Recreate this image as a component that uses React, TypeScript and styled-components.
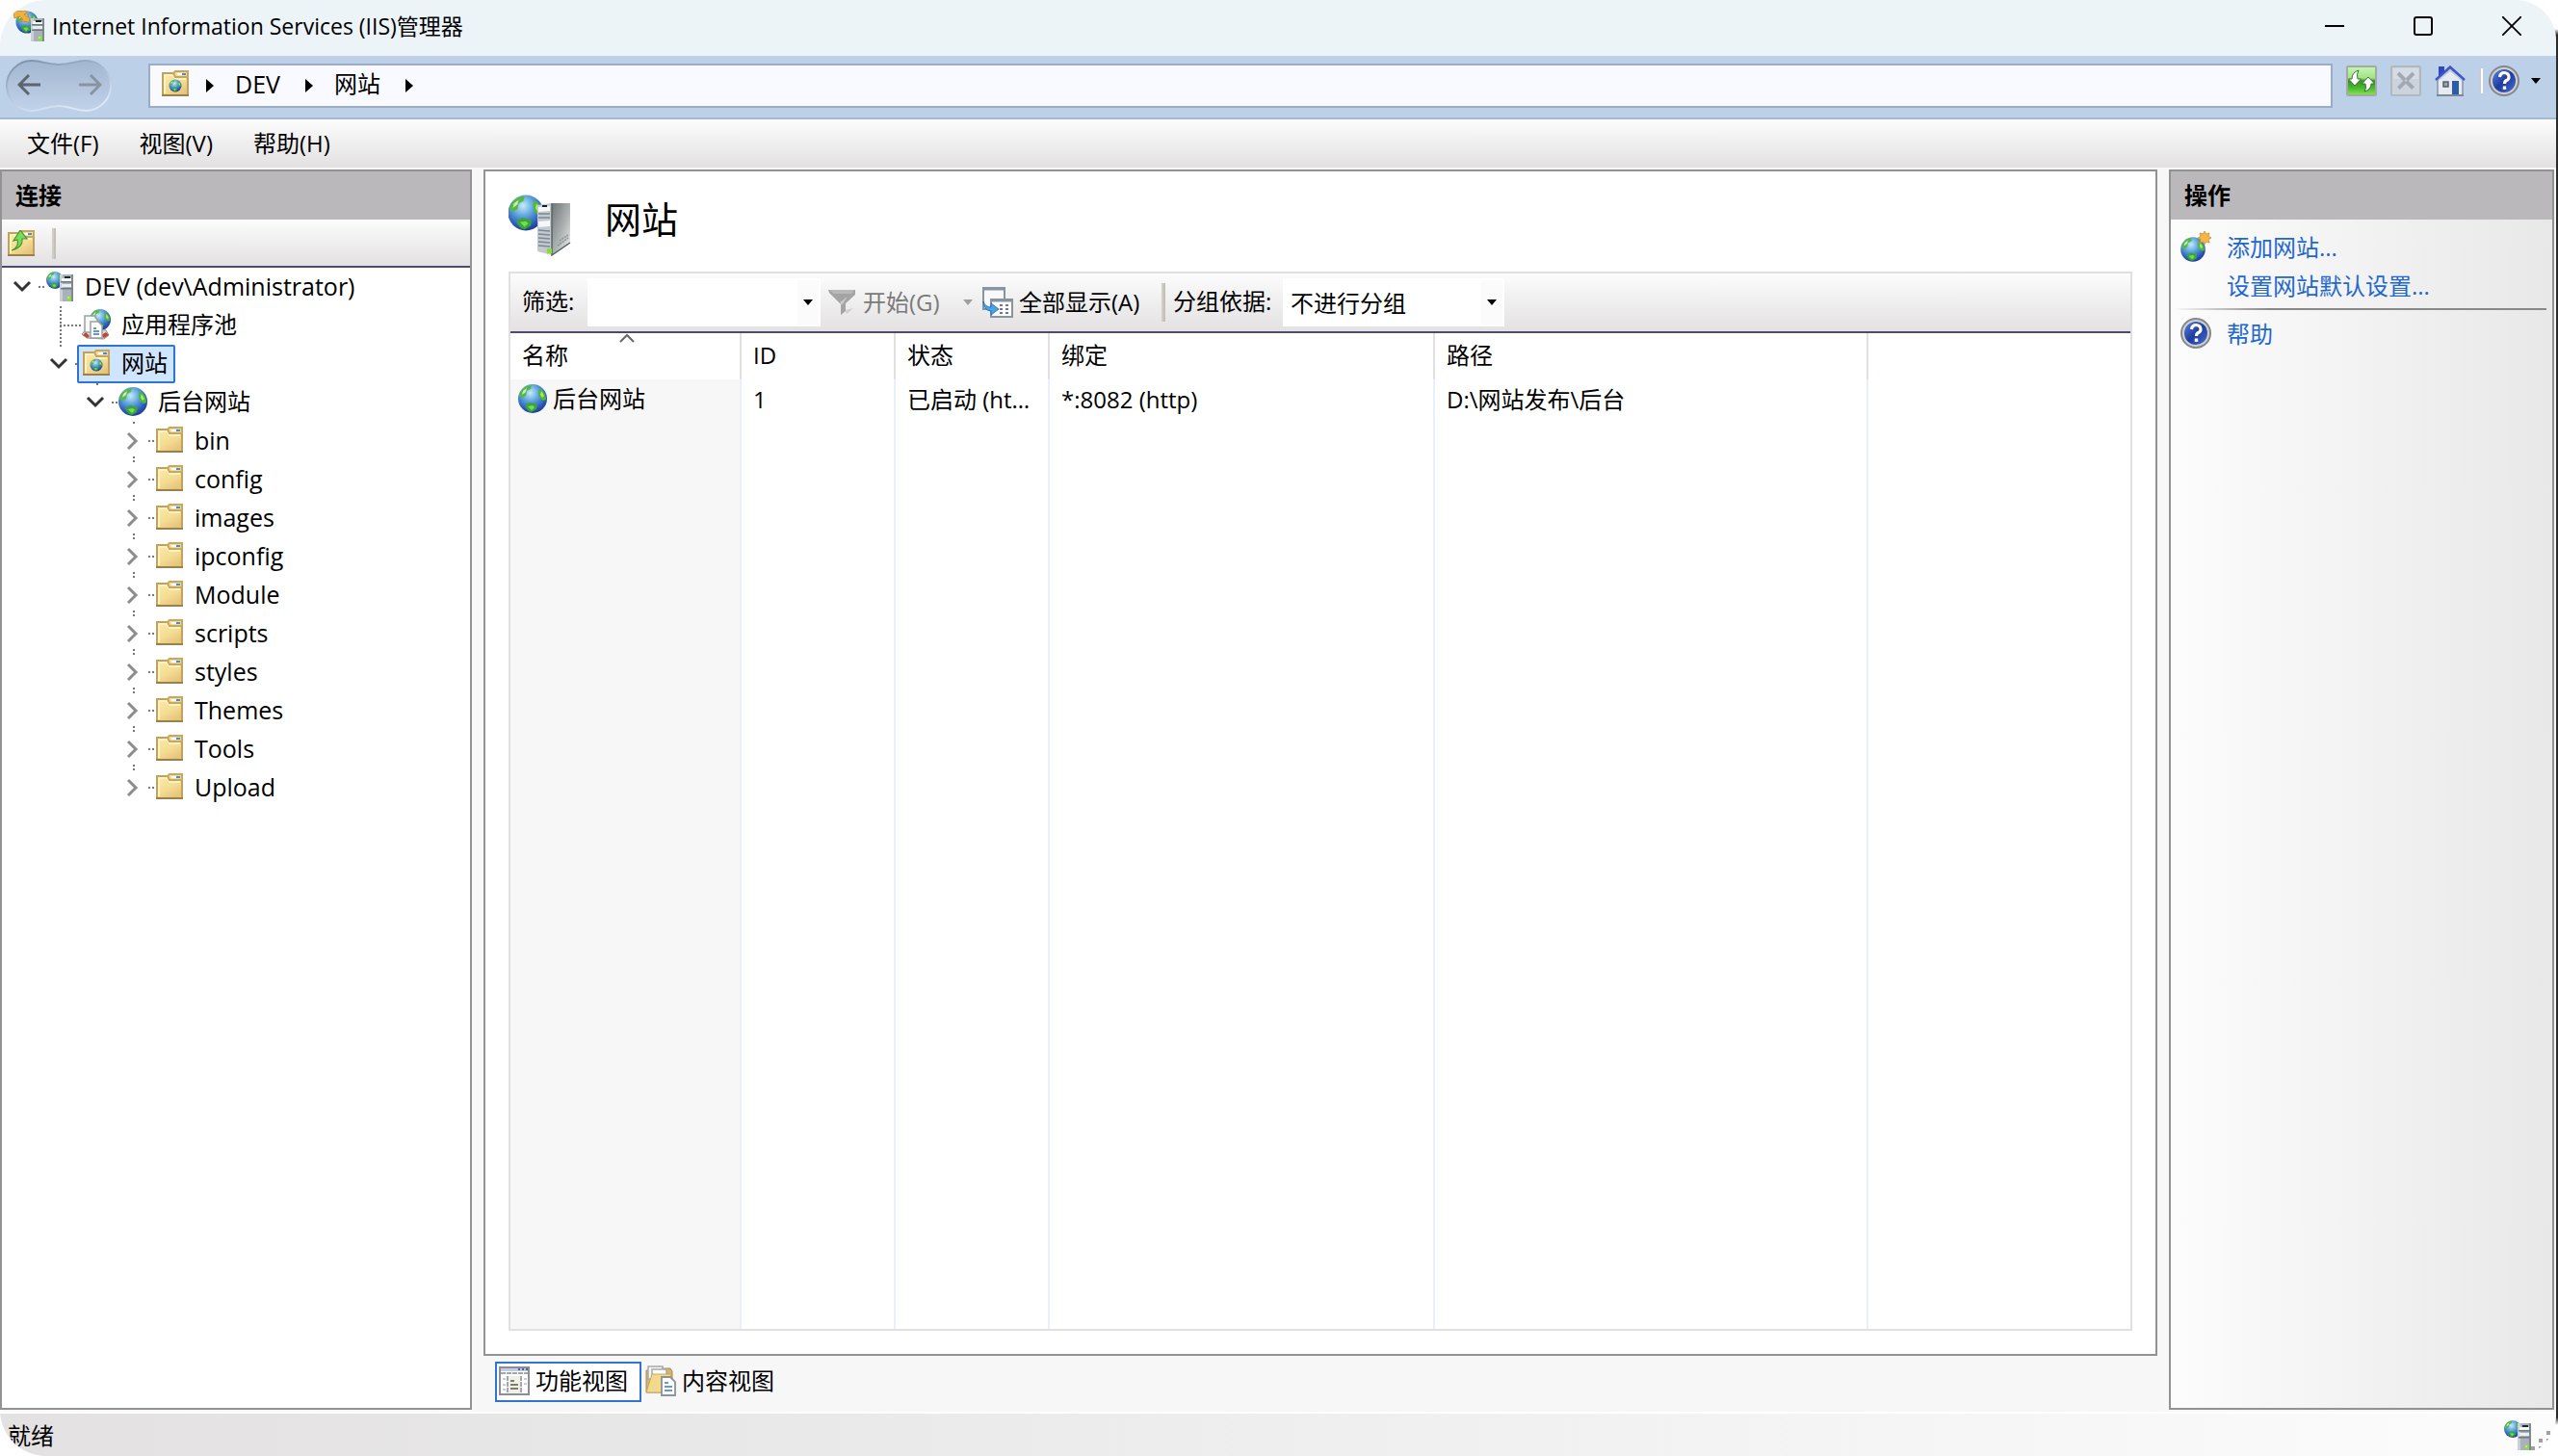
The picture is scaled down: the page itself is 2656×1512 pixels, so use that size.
import React, { useId, useState } from 'react';
import styled, { createGlobalStyle, css } from 'styled-components';

const color = {
  border: '#929292',
  line: '#4d4a6e',
  accent: '#2f74d0',
  link: '#2268cc',
  header: '#bbb8bb',
  surface: '#f7f7f7',
  rule: '#e0e0e0',
};
const barGradient = 'linear-gradient(#fcfcfc, #e3e1e2)';

const GlobalStyle = createGlobalStyle`
  * { box-sizing: border-box; }
  html, body, #root { height: 100%; }
  body {
    margin: 0;
    background: #fff;
    color: #000;
    overflow: hidden;
    font: 24px/32px "Open Sans", "Noto Sans CJK SC", sans-serif;
  }
  button, input, select { font: inherit; color: inherit; }
  svg { display: block; flex: none; }
`;

/* ---------- shared parts ---------- */

const plainButton = css`
  display: flex;
  align-items: center;
  border: 0;
  padding: 0;
  background: none;
  white-space: nowrap;
`;
const Button = styled.button`${plainButton}`;

const Desktop = styled.div`
  height: 100%;
  padding-right: 2px;
  background: linear-gradient(#fff 30px, #2c2c2c 36px, #2c2c2c calc(100% - 40px), #fff calc(100% - 32px));
`;
const Window = styled.div`
  height: 100%;
  display: flex;
  flex-direction: column;
  overflow: hidden;
  background: ${color.surface};
  border-radius: 48px 42px 42px 48px;
`;
const Corners = styled.div`
  height: 100%;
  background: linear-gradient(90deg, #fff 60px, transparent 60px, transparent calc(100% - 60px), transparent 0);
`;

/* ---------- title bar ---------- */

const TitleBar = styled.header`
  flex: none;
  display: flex;
  align-items: center;
  height: 58px;
  padding: 0 0 4px 14px;
  background: #ecf4f8;
`;
const Title = styled.h1`
  flex: 1;
  margin: 0 0 0 8px;
  font-size: 23px;
  line-height: 32px;
  font-weight: 400;
`;
const CaptionButton = styled(Button)`
  justify-content: center;
  width: 92px;
  height: 52px;
`;

/* ---------- address bar ---------- */

const NavBar = styled.nav`
  flex: none;
  display: flex;
  align-items: flex-start;
  height: 66px;
  padding: 4px 16px 0 6px;
  background: #bcd0e8;
  border-bottom: 2px solid #a5b9d4;
`;
const History = styled.div`
  position: relative;
  width: 110px;
  height: 54px;
`;
const HistoryButtons = styled.div`
  position: absolute;
  inset: 0;
  display: flex;
  justify-content: space-between;
  padding: 14px 10px 0 12px;
  align-items: flex-start;
`;
const Address = styled.div`
  flex: 1;
  display: flex;
  align-items: center;
  height: 46px;
  margin: 4px 14px 0 38px;
  padding: 0 12px 4px;
  background: #f8faff;
  border: 2px solid #9aacc6;
`;
const Crumb = styled(Button)<{ $first?: boolean }>`
  height: 32px;
  padding-top: 4px;
  margin: 0 22px 0 ${(p) => (p.$first ? 18 : 26)}px;
`;
const CrumbText = styled(Button)<{ $latin?: boolean }>`
  font-size: ${(p) => (p.$latin ? 25 : 24)}px;
`;
const NavTools = styled.div`
  display: flex;
  align-items: center;
  gap: 14px;
  padding-top: 6px;
`;
const NavDivider = styled.span`
  width: 4px;
  height: 26px;
  margin-right: -8px;
  border-left: 2px solid #c9cdd2;
  border-right: 2px solid #fff;
`;
const HelpDrop = styled(Button)`
  gap: 12px;
`;

/* ---------- menu ---------- */

const MenuBar = styled.div`
  flex: none;
  display: flex;
  align-items: center;
  gap: 42px;
  height: 50px;
  padding: 0 28px;
  background: ${barGradient};
`;

/* ---------- workspace ---------- */

const Workspace = styled.div`
  flex: 1;
  min-height: 0;
  display: grid;
  grid-template-columns: 490px minmax(0, 1fr) 400px;
  column-gap: 12px;
  padding: 2px 2px 2px 0;
`;
const Panel = styled.section<{ $shaded?: boolean }>`
  display: flex;
  flex-direction: column;
  min-height: 0;
  border: 2px solid ${color.border};
  background: ${(p) => (p.$shaded ? 'linear-gradient(90deg, #fcfcfc, #e8e8e8)' : '#fff')};
`;
const PanelTitle = styled.h2`
  flex: none;
  margin: 0;
  padding: 9px 14px;
  font-size: 24px;
  line-height: 32px;
  font-weight: 700;
  background: ${color.header};
`;
const PanelTools = styled.div`
  flex: none;
  display: flex;
  align-items: center;
  gap: 18px;
  height: 50px;
  padding: 2px 6px 0;
  background: ${barGradient};
  border-bottom: 2px solid ${color.line};
`;
const Divider = styled.span<{ $h: number }>`
  width: 4px;
  height: ${(p) => p.$h}px;
  border-left: 2px solid #cfcdc4;
  border-right: 2px solid #c3c1b2;
`;

/* ---------- tree ---------- */

const Tree = styled.ul`
  margin: 0;
  padding: 0;
  list-style: none;
`;
const TreeRow = styled.li<{ $level: number }>`
  display: flex;
  align-items: center;
  height: 40px;
  padding-left: ${(p) => p.$level * 38}px;
`;
const dots = (dir: string) => `repeating-linear-gradient(${dir}, #777 0 2px, transparent 2px 4px)`;
const Toggle = styled.button<{ $root?: boolean; $last?: boolean; $leaf?: boolean }>`
  ${plainButton}
  position: relative;
  justify-content: center;
  width: 38px;
  height: 40px;
  padding-left: 4px;
  &::before, &::after {
    content: '';
    position: absolute;
    left: 22px;
    width: 2px;
    background: ${dots('to bottom')};
  }
  &::before { top: 0; height: ${(p) => (p.$root ? 0 : p.$leaf ? 40 : 2)}px; }
  &::after { bottom: 2px; height: ${(p) => (p.$last || p.$leaf ? 0 : 2)}px; }
`;
const Stub = styled.span<{ $long?: boolean }>`
  flex: none;
  width: ${(p) => (p.$long ? 24 : 8)}px;
  height: 2px;
  margin-left: ${(p) => (p.$long ? -16 : 0)}px;
  margin-right: -6px;
  background: ${dots('to right')};
`;
const Node = styled.button<{ $selected?: boolean; $latin?: boolean }>`
  ${plainButton}
  gap: 12px;
  height: 40px;
  padding: 0 6px 2px 4px;
  font-size: ${(p) => (p.$latin ? 25 : 24)}px;
  border: 2px solid transparent;
  border-radius: 2px;
  ${(p) => p.$selected && css`
    background: #cfe5fd;
    border-color: ${color.accent};
  `}
`;
const IconSlot = styled.span<{ $w: number }>`
  display: flex;
  justify-content: center;
  width: ${(p) => p.$w}px;
`;

/* ---------- centre ---------- */

const Centre = styled.main`
  display: flex;
  flex-direction: column;
  min-height: 0;
`;
const Page = styled(Panel)`
  flex: 1;
  padding: 24px;
`;
const PageHead = styled.div`
  flex: none;
  display: flex;
  gap: 34px;
  height: 80px;
`;
const PageTitle = styled.h2`
  margin: 0;
  font-size: 38px;
  line-height: 50px;
  font-weight: 400;
`;
const ListBox = styled.div`
  flex: 1;
  min-height: 0;
  display: flex;
  flex-direction: column;
  border: 2px solid ${color.rule};
`;
const ListTools = styled.div`
  flex: none;
  display: flex;
  align-items: center;
  height: 62px;
  padding-left: 12px;
  background: ${barGradient};
  border-bottom: 2px solid ${color.line};
`;
const FieldLabel = styled.label<{ $w: number }>`
  width: ${(p) => p.$w}px;
  padding-bottom: 2px;
  white-space: nowrap;
`;
const Combo = styled.span<{ $w: number }>`
  position: relative;
  display: flex;
  width: ${(p) => p.$w}px;
  height: 50px;
  background: #fff;
`;
const comboField = css`
  flex: 1;
  min-width: 0;
  padding: 2px 8px 0;
  border: 0;
  background: none;
  outline: 0;
  appearance: none;
`;
const ComboInput = styled.input`${comboField}`;
const ComboSelect = styled.select`${comboField}`;
const ComboArrow = styled.span`
  display: flex;
  align-items: center;
  justify-content: center;
  width: 22px;
  margin: 2px;
  background: #fbfbfb;
  pointer-events: none;
`;
const GoButton = styled(Button)`
  gap: 8px;
  width: 140px;
  margin-left: 8px;
  color: #7a7a7a;
`;
const GoArrow = styled(Button)`
  width: 20px;
`;
const ShowAll = styled(Button)`
  gap: 6px;
  width: 186px;
`;
const GroupBy = styled.div`
  display: flex;
  align-items: center;
  margin-left: 8px;
`;

const TableWrap = styled.div`
  flex: 1;
  min-height: 0;
`;
const Table = styled.table`
  width: 100%;
  height: 100%;
  table-layout: fixed;
  border-spacing: 0;
`;
const Col = styled.col<{ $w?: number }>`
  width: ${(p) => (p.$w ? `${p.$w}px` : 'auto')};
`;
const Th = styled.th`
  position: relative;
  height: 48px;
  padding: 0 12px 2px;
  text-align: left;
  font-weight: 400;
  border-right: 2px solid ${color.rule};
  &:last-child { border-right: 0; }
`;
const SortMark = styled.span`
  position: absolute;
  top: 0;
  left: 50%;
  margin-left: -6px;
`;
const Td = styled.td`
  height: 44px;
  padding: 0 12px 2px;
  border-right: 2px solid #e8f1fb;
  overflow: hidden;
  white-space: nowrap;
  text-overflow: ellipsis;
  &:first-child { background: ${color.surface}; padding: 0 8px 4px; }
  &:last-child { border-right: 0; }
`;
const FillTd = styled(Td)`
  height: auto;
`;
const SiteName = styled.span`
  display: flex;
  align-items: center;
  gap: 6px;
`;

const ViewTabs = styled.div`
  flex: none;
  display: flex;
  height: 56px;
  padding: 6px 12px 0;
`;
const ViewTab = styled.button<{ $active: boolean }>`
  ${plainButton}
  gap: 6px;
  height: 42px;
  padding: 0 12px 2px 2px;
  border: 2px solid ${(p) => (p.$active ? color.accent : 'transparent')};
  background: ${(p) => (p.$active ? '#fff' : 'none')};
`;

/* ---------- actions ---------- */

const Actions = styled.ul`
  margin: 0;
  padding: 8px 6px 0 2px;
  list-style: none;
`;
const Action = styled.li`
  display: flex;
  align-items: center;
  gap: 16px;
  height: 40px;
  padding-left: 8px;
`;
const ActionLink = styled.a`
  padding-top: 2px;
  color: ${color.link};
  text-decoration: none;
`;
const ActionRule = styled.li`
  height: 2px;
  margin: 4px 0;
  background: linear-gradient(90deg, transparent, #888 100px);
`;

/* ---------- status ---------- */

const StatusBar = styled.footer`
  flex: none;
  display: flex;
  align-items: center;
  justify-content: space-between;
  height: 46px;
  padding: 0 6px 0 8px;
  border-top: 2px solid #fff;
  background: linear-gradient(90deg, #e3e1e2, #e8e7e8 25%, #fcfcfc);
`;
const StatusText = styled.span`
  padding-top: 2px;
`;
const StatusEnd = styled.div`
  display: flex;
  align-items: flex-end;
`;

/* ---------- drawings ---------- */

const GlobeArt = ({ cx, cy, r }: { cx: number; cy: number; r: number }) => {
  const id = useId();
  return (
    <g transform={`translate(${cx - r} ${cy - r}) scale(${r / 15})`}>
      <defs>
        <radialGradient id={id} cx="0.42" cy="0.3" r="0.75">
          <stop offset="0" stopColor="#c4ecfb" />
          <stop offset="0.4" stopColor="#5ea3dc" />
          <stop offset="0.75" stopColor="#2c5cba" />
          <stop offset="1" stopColor="#1c2f8c" />
        </radialGradient>
      </defs>
      <circle cx="15" cy="15" r="15" fill={`url(#${id})`} />
      <path d="M3 7 Q7 1 14 1 L13 5 L9 7 L8 12 L4 14 L1 13 Q1 10 3 7Z" fill="#57b647" />
      <path d="M5 7 L9 4 L8 8 L4 11Z" fill="#c8f0a8" />
      <path d="M22 4 Q29 9 29 16 L26 17 L22 14 L21 9Z" fill="#4fb83a" />
      <path d="M24 7 L27 12 L25 14 L23 11Z" fill="#a6ec5a" />
      <path d="M7 22 L12 19 L20 21 L19 26 L14 29 Q9 28 7 22Z" fill="#3da43c" />
      <path d="M10 23 L15 22 L17 24 L14 27Z" fill="#6fe04a" />
    </g>
  );
};

const Globe = ({ size = 30 }: { size?: number }) => (
  <svg width={size} height={size} viewBox="0 0 30 30"><GlobeArt cx={15} cy={15} r={15} /></svg>
);

const GlobeServer = ({ arrow }: { arrow?: boolean }) => (
  <svg width={arrow ? 32 : 28} height="32" viewBox={arrow ? '0 0 32 32' : '0 0 28 32'}>
    {arrow ? <GlobeArt cx={14} cy={12} r={11.5} /> : <GlobeArt cx={9} cy={10} r={9} />}
    <g transform={arrow ? 'translate(2 0)' : 'translate(-2 0)'}>
      <rect x="16" y={arrow ? 8 : 4} width="14" height={arrow ? 24 : 28} fill="#a9b1b9" />
      <rect x="16" y={arrow ? 8 : 4} width="3" height={arrow ? 24 : 28} fill="#c9d0d6" />
      <rect x="28" y={arrow ? 8 : 4} width="2" height={arrow ? 24 : 28} fill="#808890" />
      <rect x="18" y={arrow ? 11 : 8} width="10" height="3" fill="#f1f6f8" />
      <rect x="21" y={arrow ? 10 : 6} width="6" height="2" fill="#20272c" />
      <rect x="18" y={arrow ? 16 : 14} width="10" height="3" fill="#e8eef2" />
      <rect x="17" y={arrow ? 14 : 11} width="12" height="1.5" fill="#717980" />
      <rect x="17" y={arrow ? 19.5 : 18} width="12" height="1.5" fill="#717980" />
      <rect x="24" y="27" width="4" height="4" fill="#7ce640" />
      <rect x="24" y="27" width="2" height="2" fill="#d7e84a" />
    </g>
    {arrow && <path d="M0 1 L13 0 L14 2 L11 4 L15 7 L15 3 L17 12 L7 11 L10 9 L6 6 L1 8Z" fill="#f0b040" stroke="#c88420" strokeWidth="0.8" />}
  </svg>
);

const BigServer = () => {
  const id = useId();
  return (
    <svg width="66" height="64" viewBox="0 0 66 64">
      <defs>
        <linearGradient id={id} x1="0" y1="0" x2="1" y2="1">
          <stop offset="0" stopColor="#6f7677" />
          <stop offset="0.55" stopColor="#aeb3b4" />
          <stop offset="1" stopColor="#f3f4f4" />
        </linearGradient>
      </defs>
      <GlobeArt cx={18} cy={19} r={18.5} />
      <path d="M30 11 L45 9 L45 63 L30 59Z" fill="#c3c9ce" />
      <path d="M31 13 L43 12 V17 L31 18Z M31 28 L43 27 V33 L31 34Z" fill="#f5f8fa" />
      <path d="M31 20 H43 M31 24 H43 M31 37 L43 38 M31 41 L43 42 M31 45 L43 46 M31 49 L43 50 M31 53 L43 54" stroke="#7c8892" strokeWidth="1.6" />
      <path d="M35 12 H40" stroke="#1c1f22" strokeWidth="2" />
      <path d="M45 9 H64 V50 L45 63Z" fill={`url(#${id})`} />
      <path d="M45 9 V63 L64 50" fill="none" stroke="#596062" strokeWidth="1.4" />
      <path d="M51 53 L62 45 M53 48 L62 42" stroke="#8a8f90" strokeWidth="1.6" strokeDasharray="2 1" />
      <rect x="40" y="56" width="5" height="5" fill="#86e02a" />
    </svg>
  );
};

const Folder = ({ globe, up }: { globe?: boolean; up?: boolean }) => {
  const id = useId();
  return (
    <svg width="28" height="28" viewBox="0 0 28 28">
      <defs>
        <linearGradient id={id} x1="0" y1="0" x2="0.6" y2="1">
          <stop offset="0" stopColor="#fdeaa8" />
          <stop offset="0.6" stopColor="#f5dc94" />
          <stop offset="1" stopColor="#e6c67e" />
        </linearGradient>
      </defs>
      <path d="M1 3 H27 V26 H1Z" fill={`url(#${id})`} stroke="#c0a25c" strokeWidth="2" />
      <path d="M3 24 V5 H12 L14 9 H25" fill="none" stroke="#fff3c4" strokeWidth="2" />
      <path d="M12 3 L14 1 H27 V7 H14Z" fill="#f3dca0" stroke="#c9a65a" strokeWidth="2" />
      <path d="M0 26 H28" stroke="#9a8148" strokeWidth="2" />
      <rect x="16" y="3" width="6" height="2" fill="#fff" />
      <rect x="21" y="3" width="4" height="2" fill="#3f8ee0" />
      {globe && <GlobeArt cx={14} cy={16} r={6.5} />}
      {up && <path d="M4 21 Q12 18 10 10 L6 11 L13 0 L20 9 L15 9 Q16 18 4 21Z" fill="#7fd857" stroke="#3f9a2e" strokeWidth="1.2" />}
    </svg>
  );
};

const AppPools = () => (
  <svg width="32" height="32" viewBox="0 0 32 32">
    <GlobeArt cx={20} cy={11} r={11} />
    <path d="M1 26 L6 20 L26 22 L29 27 L24 31 L6 30Z" fill="#d9dcdd" stroke="#8d9294" />
    <path d="M2 27 L5 24 L9 28 L7 30Z M21 27 L26 24 L29 27 L24 30Z" fill="#c8432e" />
    <path d="M4 7 H14 L17 11 V24 H4Z" fill="#f7f8f8" stroke="#9aa0a4" strokeWidth="1.5" />
    <path d="M10 13 H18 L22 17 V30 H10Z" fill="#fff" stroke="#9aa0a4" strokeWidth="1.5" />
    <path d="M13 20 H16 M13 23 H19 M13 26 H19" stroke="#3a70b8" strokeWidth="1.5" />
  </svg>
);

const HelpIcon = () => {
  const id = useId();
  return (
    <svg width="32" height="32" viewBox="0 0 32 32">
      <defs>
        <linearGradient id={id} x1="0" y1="0" x2="1" y2="1">
          <stop offset="0" stopColor="#5d84dc" />
          <stop offset="0.5" stopColor="#1e3ca0" />
          <stop offset="1" stopColor="#4a6fd0" />
        </linearGradient>
      </defs>
      <circle cx="16" cy="16" r="15" fill="#cfd0d2" stroke="#85878a" strokeWidth="2" />
      <circle cx="16" cy="16" r="12" fill={`url(#${id})`} />
      <path d="M11.5 12 Q12 7.5 16.5 7.5 Q21 8 21 12 Q21 14.5 18.5 15.5 Q16.5 16.5 16.5 19" fill="none" stroke="#fff" strokeWidth="3.2" />
      <rect x="14.8" y="21.5" width="3.4" height="3.4" fill="#fff" />
    </svg>
  );
};

const Refresh = () => (
  <svg width="32" height="32" viewBox="0 0 32 32">
    <defs>
      <linearGradient id="refresh-face" x1="0" y1="0" x2="0" y2="1">
        <stop offset="0" stopColor="#c9f5b4" />
        <stop offset="0.4" stopColor="#a0e488" />
        <stop offset="0.5" stopColor="#2f9422" />
        <stop offset="0.75" stopColor="#4cb834" />
        <stop offset="1" stopColor="#86ea50" />
      </linearGradient>
    </defs>
    <rect x="1" y="1" width="30" height="30" rx="1" fill="url(#refresh-face)" stroke="#a5aaa0" strokeWidth="2" />
    <path d="M13 5 Q6 7 6 14 H2.5 L9 21 L15.5 14 H12 Q10.5 9 13 5Z" fill="#fff" stroke="#3f6f38" strokeWidth="1" />
    <path d="M19 27 Q26 25 26 19 H29.5 L23 12 L16.5 19 H20 Q21.5 23 19 27Z" fill="#fff" stroke="#3f6f38" strokeWidth="1" />
  </svg>
);

const Stop = () => (
  <svg width="32" height="32" viewBox="0 0 32 32">
    <rect x="1" y="1" width="30" height="30" rx="1" fill="#cbd3dd" stroke="#b2b8c0" strokeWidth="2" />
    <path d="M3 3 H29 V14 H3Z" fill="#d6dce4" />
    <path d="M8 8 L24 24 M24 8 L8 24" stroke="#a2a9b2" strokeWidth="4" strokeDasharray="10 2" />
  </svg>
);

const Home = () => (
  <svg width="32" height="32" viewBox="0 0 32 32">
    <path d="M3 14 L16 3 L29 14 V31 H3Z" fill="#e6ebf2" stroke="#8e98a8" strokeWidth="1.6" />
    <path d="M4 1 H10 V8 L4 12Z" fill="#3046c4" />
    <path d="M1 15 L16 1.5 L31 15" fill="none" stroke="#3a56cc" strokeWidth="2.4" />
    <path d="M4 15 L16 5 L28 15" fill="none" stroke="#bac4dc" strokeWidth="1.4" />
    <rect x="9" y="17" width="5" height="5" fill="#9aa6b2" stroke="#4d5860" strokeWidth="1.4" />
    <rect x="18" y="16" width="7" height="15" fill="#2a5ca8" />
    <path d="M2 31 H30" stroke="#7c8796" strokeWidth="2" />
  </svg>
);

const Capsule = () => (
  <svg width="110" height="54" viewBox="0 0 110 54">
    <defs>
      <linearGradient id="capsule-fill" x1="0" y1="0" x2="0" y2="1">
        <stop offset="0" stopColor="#a3b6d0" />
        <stop offset="1" stopColor="#c0d3ea" />
      </linearGradient>
      <linearGradient id="capsule-edge" x1="0" y1="0" x2="0.5" y2="1">
        <stop offset="0" stopColor="#788aa4" />
        <stop offset="0.45" stopColor="#a6b8d0" />
        <stop offset="1" stopColor="#dbe7f6" />
      </linearGradient>
    </defs>
    <path
      d="M27 1 C38 1 42 5 55 5 C68 5 72 1 83 1 A26 26 0 0 1 83 53 C72 53 68 48 55 48 C42 48 38 53 27 53 A26 26 0 0 1 27 1Z"
      fill="url(#capsule-fill)"
      stroke="url(#capsule-edge)"
      strokeWidth="2"
    />
  </svg>
);

const NavArrow = ({ forward }: { forward?: boolean }) => (
  <svg width="24" height="24" viewBox="0 0 24 24">
    <path
      d={forward ? 'M0 12 H22 M12 2 L22 12 L12 22' : 'M24 12 H2 M12 2 L2 12 L12 22'}
      fill="none"
      stroke={forward ? '#8a93a0' : '#5e646e'}
      strokeWidth="3"
    />
  </svg>
);

const Triangle = () => (
  <svg width="8" height="14" viewBox="0 0 8 14"><path d="M0 0 L8 7 L0 14Z" /></svg>
);
const Down = ({ fill = '#000' }: { fill?: string }) => (
  <svg width="10" height="6" viewBox="0 0 10 6"><path d="M0 0 H10 L5 6Z" fill={fill} /></svg>
);

const Chevron = ({ open }: { open: boolean }) => (
  <svg width="20" height="20" viewBox="0 0 20 20">
    <path
      d={open ? 'M2 5 L10 13 L18 5' : 'M6 2 L14 10 L6 18'}
      fill="none"
      stroke={open ? '#333' : '#8c8c8c'}
      strokeWidth="3"
    />
  </svg>
);

const Funnel = () => (
  <svg width="28" height="28" viewBox="0 0 28 28">
    <path d="M0 1 H28 V6 L18 15 V23 L13 27 V16 L1 4Z" fill="#a4a4a4" />
    <path d="M1 1 H27 L24 5 H6Z" fill="#b9b9b9" />
    <path d="M12 14 L20 8 L14 17Z" fill="#c9c9c9" />
    <path d="M18 22 L26 20 L19 26Z" fill="#cfcfcf" />
  </svg>
);

const ShowAllIcon = () => (
  <svg width="32" height="32" viewBox="0 0 32 32">
    <rect x="1" y="1" width="22" height="22" fill="#f8f9fb" stroke="#8a949e" strokeWidth="2" />
    <path d="M0 2 H24" stroke="#8a949e" strokeWidth="3" />
    <rect x="9" y="13" width="22" height="18" fill="#fff" stroke="#8a949e" strokeWidth="2" />
    <path d="M8 14 H32" stroke="#8a949e" strokeWidth="3" />
    <path d="M18 19 h3 M24 19 h3 M18 23 h3 M24 23 h3 M18 27 h3 M24 27 h3" stroke="#7072a8" strokeWidth="2" />
    <path d="M1 15 Q3 21 9 21 V17 L17 23 L9 29 V25 Q2 25 1 15Z" fill="#4aa4e4" stroke="#1c66b4" strokeWidth="0.8" />
  </svg>
);

const FeaturesIcon = () => (
  <svg width="32" height="30" viewBox="0 0 32 30">
    <rect x="1" y="1" width="30" height="28" fill="#fff" stroke="#8b8e96" strokeWidth="2" />
    <rect x="2" y="2" width="28" height="3" fill="#c3cbe0" />
    <path d="M20 3 h2 M24 3 h2 M28 3 h2" stroke="#4c5f9c" strokeWidth="2" />
    <path d="M2 7 H30 M9 10 V28 M23 10 V28" stroke="#a3a6ac" strokeWidth="2" strokeDasharray="5 1" />
    <rect x="10" y="10" width="12" height="18" fill="#f0f0e6" />
    <path d="M12 15 h4 M12 19 h8 M12 23 h8" stroke="#55584f" strokeWidth="1.6" />
    <path d="M4 13 h3 M4 19 h3 M4 24 h3 M26 13 h3 M26 18 h3" stroke="#b7bdd0" strokeWidth="1.6" />
  </svg>
);

const ContentIcon = () => (
  <svg width="32" height="32" viewBox="0 0 32 32">
    <path d="M1 5 H10 L13 3 H26 L28 6 V28 H1Z" fill="#d6b468" stroke="#a88c4c" />
    <path d="M3 1 H18 V14 H3Z" fill="#f6f6f6" stroke="#a9a9a9" strokeWidth="1.5" />
    <path d="M7 4 H22 V14 H7Z" fill="#fff" stroke="#a9a9a9" strokeWidth="1.5" />
    <path d="M7 9 H27 L22 28 H1Z" fill="#f3d98e" stroke="#c7a75e" />
    <path d="M17 12 H26 L31 17 V31 H17Z" fill="#fff" stroke="#8e9296" strokeWidth="1.8" />
    <path d="M20 18 h4 M20 22 h8 M20 26 h8" stroke="#3a76bc" strokeWidth="1.6" />
  </svg>
);

const NewSite = () => (
  <svg width="32" height="32" viewBox="0 0 32 32">
    <GlobeArt cx={13} cy={19} r={12.8} />
    <path d="M25 0 L26.5 3 L30 2 L29 5.5 L32 7 L29 8.5 L30 12 L26.5 11 L25 14 L23.5 11 L20 12 L21 8.5 L18 7 L21 5.5 L20 2 L23.5 3Z" fill="#f6b648" stroke="#c98a2c" strokeWidth="0.8" />
  </svg>
);

const Grip = () => (
  <svg width="20" height="20" viewBox="0 0 20 20">
    <path d="M16 0 h4 v4 h-4Z M8 8 h4 v4 h-4Z M16 8 h4 v4 h-4Z M0 16 h4 v4 h-4Z M8 16 h4 v4 h-4Z" fill="#a0a0a0" />
  </svg>
);

/* ---------- data ---------- */

type Item = {
  label: string;
  level: number;
  icon: React.ReactNode;
  open?: boolean;
  leaf?: boolean;
  last?: boolean;
  latin?: boolean;
};

const folders = ['bin', 'config', 'images', 'ipconfig', 'Module', 'scripts', 'styles', 'Themes', 'Tools', 'Upload'];

const tree: Item[] = [
  { label: 'DEV (dev\\Administrator)', level: 0, icon: <GlobeServer />, open: true, last: true, latin: true },
  { label: '应用程序池', level: 1, icon: <AppPools />, leaf: true },
  { label: '网站', level: 1, icon: <Folder globe />, open: true, last: true },
  { label: '后台网站', level: 2, icon: <Globe />, open: true, last: true },
  ...folders.map((label, i) => ({
    label,
    level: 3,
    icon: <Folder />,
    open: false,
    last: i === folders.length - 1,
    latin: true,
  })),
];

const columns = [
  { name: '名称', width: 240 },
  { name: 'ID', width: 160 },
  { name: '状态', width: 160 },
  { name: '绑定', width: 400 },
  { name: '路径', width: 450 },
  { name: '' },
];

const site = ['1', '已启动 (http)', '*:8082 (http)', 'D:\\网站发布\\后台', ''];

export default function App() {
  const [selected, setSelected] = useState('网站');
  const [view, setView] = useState('功能视图');

  return (
    <Desktop>
      <GlobalStyle />
      <Corners>
        <Window>
          <TitleBar>
            <GlobeServer arrow />
            <Title>Internet Information Services (IIS)管理器</Title>
            <CaptionButton aria-label="最小化">
              <svg width="20" height="20"><path d="M0 10 H20" stroke="#000" strokeWidth="2" /></svg>
            </CaptionButton>
            <CaptionButton aria-label="最大化">
              <svg width="20" height="20"><rect x="1" y="1" width="18" height="18" rx="2" fill="none" stroke="#000" strokeWidth="2" /></svg>
            </CaptionButton>
            <CaptionButton aria-label="关闭">
              <svg width="20" height="20"><path d="M0 0 L20 20 M20 0 L0 20" stroke="#000" strokeWidth="1.8" /></svg>
            </CaptionButton>
          </TitleBar>

          <NavBar>
            <History>
              <Capsule />
              <HistoryButtons>
                <Button aria-label="后退"><NavArrow /></Button>
                <Button aria-label="前进"><NavArrow forward /></Button>
              </HistoryButtons>
            </History>
            <Address>
              <Folder globe />
              <Crumb $first aria-label="展开"><Triangle /></Crumb>
              <CrumbText $latin>DEV</CrumbText>
              <Crumb aria-label="展开"><Triangle /></Crumb>
              <CrumbText>网站</CrumbText>
              <Crumb aria-label="展开"><Triangle /></Crumb>
            </Address>
            <NavTools>
              <Button aria-label="刷新"><Refresh /></Button>
              <Button aria-label="停止"><Stop /></Button>
              <Button aria-label="主页"><Home /></Button>
              <NavDivider />
              <HelpDrop aria-label="帮助"><HelpIcon /><Down /></HelpDrop>
            </NavTools>
          </NavBar>

          <MenuBar>
            <Button>文件(F)</Button>
            <Button>视图(V)</Button>
            <Button>帮助(H)</Button>
          </MenuBar>

          <Workspace>
            <Panel>
              <PanelTitle>连接</PanelTitle>
              <PanelTools>
                <Button aria-label="连接"><Folder up /></Button>
                <Divider $h={32} />
              </PanelTools>
              <Tree>
                {tree.map((item) => (
                  <TreeRow key={item.label} $level={item.level}>
                    <Toggle $root={item.level === 0} $last={item.last} $leaf={item.leaf} aria-label={item.label}>
                      {!item.leaf && <Chevron open={!!item.open} />}
                    </Toggle>
                    <Stub $long={item.leaf} />
                    <Node
                      $selected={item.label === selected}
                      $latin={item.latin}
                      onClick={() => setSelected(item.label)}
                    >
                      <IconSlot $w={28}>{item.icon}</IconSlot>
                      {item.label}
                    </Node>
                  </TreeRow>
                ))}
              </Tree>
            </Panel>

            <Centre>
              <Page>
                <PageHead>
                  <BigServer />
                  <PageTitle>网站</PageTitle>
                </PageHead>
                <ListBox>
                  <ListTools>
                    <FieldLabel $w={68} htmlFor="filter">筛选:</FieldLabel>
                    <Combo $w={242}>
                      <ComboInput id="filter" />
                      <ComboArrow><Down /></ComboArrow>
                    </Combo>
                    <GoButton><Funnel />开始(G)</GoButton>
                    <GoArrow aria-label="开始选项"><Down fill="#a0a0a0" /></GoArrow>
                    <ShowAll><ShowAllIcon />全部显示(A)</ShowAll>
                    <Divider $h={40} />
                    <GroupBy>
                      <FieldLabel $w={114} htmlFor="group">分组依据:</FieldLabel>
                      <Combo $w={230}>
                        <ComboSelect id="group"><option>不进行分组</option></ComboSelect>
                        <ComboArrow><Down /></ComboArrow>
                      </Combo>
                    </GroupBy>
                  </ListTools>
                  <TableWrap>
                    <Table>
                      <colgroup>
                        {columns.map((c) => <Col key={c.name} $w={c.width} />)}
                      </colgroup>
                      <thead>
                        <tr>
                          {columns.map((c, i) => (
                            <Th key={c.name}>
                              {c.name}
                              {i === 0 && (
                                <SortMark>
                                  <svg width="16" height="10"><path d="M1 9 L8 2 L15 9" fill="none" stroke="#666" strokeWidth="2" /></svg>
                                </SortMark>
                              )}
                            </Th>
                          ))}
                        </tr>
                      </thead>
                      <tbody>
                        <tr>
                          <Td><SiteName><Globe />后台网站</SiteName></Td>
                          {site.map((v, i) => <Td key={i}>{v}</Td>)}
                        </tr>
                        <tr>
                          {columns.map((c) => <FillTd key={c.name} />)}
                        </tr>
                      </tbody>
                    </Table>
                  </TableWrap>
                </ListBox>
              </Page>
              <ViewTabs>
                <ViewTab $active={view === '功能视图'} onClick={() => setView('功能视图')}><FeaturesIcon />功能视图</ViewTab>
                <ViewTab $active={view === '内容视图'} onClick={() => setView('内容视图')}><ContentIcon />内容视图</ViewTab>
              </ViewTabs>
            </Centre>

            <Panel $shaded>
              <PanelTitle>操作</PanelTitle>
              <Actions>
                <Action><IconSlot $w={32}><NewSite /></IconSlot><ActionLink href="#add">添加网站...</ActionLink></Action>
                <Action><IconSlot $w={32} /><ActionLink href="#defaults">设置网站默认设置...</ActionLink></Action>
                <ActionRule />
                <Action><IconSlot $w={32}><HelpIcon /></IconSlot><ActionLink href="#help">帮助</ActionLink></Action>
              </Actions>
            </Panel>
          </Workspace>

          <StatusBar>
            <StatusText>就绪</StatusText>
            <StatusEnd><GlobeServer /><Grip /></StatusEnd>
          </StatusBar>
        </Window>
      </Corners>
    </Desktop>
  );
}
